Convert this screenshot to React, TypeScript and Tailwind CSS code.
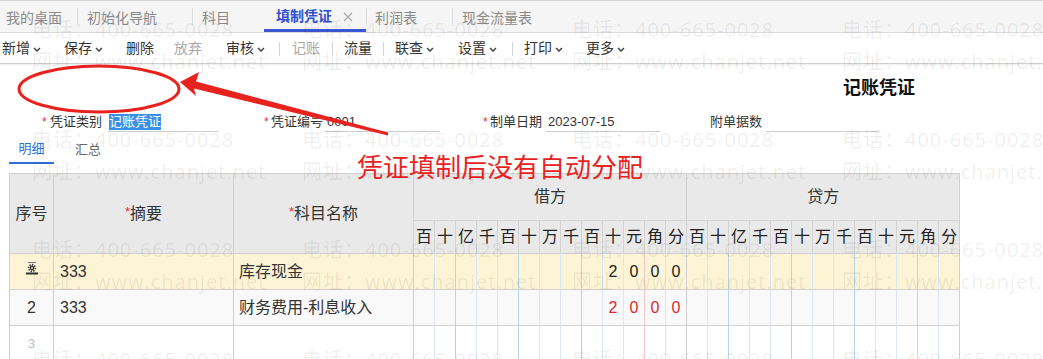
import React from "react";

const digits = ["百", "十", "亿", "千", "百", "十", "万", "千", "百", "十", "元", "角", "分"];

function Chevron() {
  return (
    <svg width="8" height="5" viewBox="0 0 8 5" className="ml-[3px] mt-[1px]">
      <path d="M1 1l3 3 3-3" fill="none" stroke="#444" strokeWidth="1.5" />
    </svg>
  );
}

function ToolItem({
  label,
  chevron,
  disabled,
  className = "",
}: {
  label: string;
  chevron?: boolean;
  disabled?: boolean;
  className?: string;
}) {
  return (
    <div className={`flex items-center ${className}`}>
      <span className={disabled ? "text-[#a8a8a8]" : "text-[#333]"}>{label}</span>
      {chevron && <Chevron />}
    </div>
  );
}

function Sep({ className = "" }: { className?: string }) {
  return <div className={`w-px h-[14px] bg-[#d4d4d4] ${className}`} />;
}

function RowIcon() {
  return (
    <svg width="12" height="13" viewBox="0 0 12 13" className="mx-auto -mt-[6px]">
      <line x1="2" y1="0.5" x2="10" y2="0.5" stroke="#777" strokeWidth="1" />
      <circle cx="6" cy="6" r="3.4" fill="none" stroke="#333" strokeWidth="1.6" strokeDasharray="1.3 1.3" />
      <circle cx="6" cy="6" r="2.4" fill="#333" />
      <circle cx="6" cy="6" r="0.9" fill="#fdf4d5" />
      <rect x="0" y="10.5" width="12" height="2" fill="#333" />
    </svg>
  );
}

function digitBorder(i: number) {
  if (i === 0) return "border-l-[#d0d0d0]";
  if (i === 11) return "border-l-[#f0c6c6]";
  if (i === 2 || i === 5 || i === 8) return "border-l-[#b9d3ea]";
  return "border-l-[#d9e8f4]";
}

function AmountCells({ values, red }: { values: string[]; red?: boolean }) {
  return (
    <>
      {digits.map((_, i) => (
        <td
          key={i}
          className={`border-l border-t border-t-[#d0d0d0] text-center ${digitBorder(i)} ${
            red ? "text-[#e02a2a]" : "text-[#222]"
          }`}
        >
          {values[i] ?? ""}
        </td>
      ))}
    </>
  );
}

function Watermark() {
  const cells = Array.from({ length: 16 });
  return (
    <div className="pointer-events-none absolute left-[32px] top-[14px] grid grid-cols-[repeat(4,270px)] auto-rows-[110px] font-['Open_Sans','Noto_Sans_CJK_SC',sans-serif] text-[20px] leading-[32px] tracking-[1px] text-black/[0.08] whitespace-nowrap">
      {cells.map((_, i) => (
        <div key={i}>
          <div>电话：400-665-0028</div>
          <div>网址：www.chanjet.net</div>
        </div>
      ))}
    </div>
  );
}

function Annotation() {
  return (
    <>
      <svg
        width="1043"
        height="359"
        viewBox="0 0 1043 359"
        className="pointer-events-none absolute left-0 top-0"
      >
        <ellipse cx="99" cy="89" rx="80" ry="23" fill="none" stroke="#e8221e" strokeWidth="3" />
        <polygon
          points="180,82 199,72 196,81.5 388,132.5 388,135.5 194,88.5 196,96"
          fill="#e8221e"
        />
      </svg>
      <div className="pointer-events-none absolute left-[357px] top-[150px] text-[26px] leading-[32px] text-[#e8231f] font-['Noto_Sans_CJK_SC',sans-serif] whitespace-nowrap">
        凭证填制后没有自动分配
      </div>
    </>
  );
}

export default function App() {
  return (
    <div className="relative w-[1043px] h-[359px] overflow-hidden bg-white font-['Liberation_Sans','Noto_Sans_CJK_SC',sans-serif]">
      {/* tabs */}
      <div className="flex h-[33px] items-stretch border-t border-b border-t-[#d6d6d6] border-b-[#dedede] bg-[#f5f5f5] text-[14px] text-[#8a8a8a]">
        <div className="flex w-[77px] items-center pl-[6px] pt-[3px]">我的桌面</div>
        <div className="my-[7px] w-px bg-[#dcdcdc]" />
        <div className="flex w-[114px] items-center pl-[9px] pt-[3px]">初始化导航</div>
        <div className="my-[7px] w-px bg-[#dcdcdc]" />
        <div className="flex w-[71px] items-center pl-[9px] pt-[3px]">科目</div>
        <div className="flex w-[102px] items-center border-b-[3px] border-[#3a57d6] pl-[12px] pt-[3px]">
          <span className="font-bold text-[#2f4fd0]">填制凭证</span>
          <svg width="10" height="10" viewBox="0 0 10 10" className="ml-[11px]">
            <path d="M1 1l8 8M9 1l-8 8" stroke="#aaa" strokeWidth="1.2" />
          </svg>
        </div>
        <div className="my-[7px] w-px bg-[#dcdcdc]" />
        <div className="flex w-[85px] items-center pl-[8px] pt-[3px]">利润表</div>
        <div className="my-[7px] w-px bg-[#dcdcdc]" />
        <div className="flex items-center pl-[9px] pt-[3px]">现金流量表</div>
      </div>

      {/* toolbar */}
      <div className="flex h-[31px] items-center border-b border-[#cfcfcf] pl-[2px] pt-[1px] text-[14px] shadow-[0_1px_2px_rgba(0,0,0,0.08)]">
        <ToolItem label="新增" chevron />
        <ToolItem label="保存" chevron className="ml-[23px]" />
        <ToolItem label="删除" className="ml-[23px]" />
        <ToolItem label="放弃" disabled className="ml-[20px]" />
        <ToolItem label="审核" chevron className="ml-[24px]" />
        <Sep className="ml-[14px]" />
        <ToolItem label="记账" disabled className="ml-[12px]" />
        <Sep className="ml-[12px]" />
        <ToolItem label="流量" className="ml-[11px]" />
        <Sep className="ml-[11px]" />
        <ToolItem label="联查" chevron className="ml-[11px]" />
        <ToolItem label="设置" chevron className="ml-[24px]" />
        <Sep className="ml-[15px]" />
        <ToolItem label="打印" chevron className="ml-[11px]" />
        <ToolItem label="更多" chevron className="ml-[23px]" />
      </div>

      {/* title */}
      <div className="flex h-[48px] items-center justify-end pr-[128px]">
        <span className="text-[18px] font-bold text-[#111]">记账凭证</span>
      </div>

      {/* header fields */}
      <div className="flex h-[20px] items-center text-[13px] text-[#333]">
        <span className="ml-[42px] w-[8px] text-[12px] text-[#e03030]">*</span>
        <span>凭证类别</span>
        <div className="ml-[6px] flex h-[20px] w-[110px] items-center border-b border-[#cccccc] pl-[1px]">
          <span className="bg-[#3b8fe8] leading-[16px] text-white">记账凭证</span>
        </div>
        <span className="ml-[46px] w-[7px] text-[12px] text-[#e03030]">*</span>
        <span>凭证编号</span>
        <div className="ml-[2px] flex h-[20px] w-[115px] items-center border-b border-[#cccccc] pl-[2px]">
          0001
        </div>
        <span className="ml-[43px] w-[7px] text-[12px] text-[#e03030]">*</span>
        <span>制单日期</span>
        <div className="ml-[4px] flex h-[20px] w-[114px] items-center border-b border-[#cccccc] pl-[2px]">
          2023-07-15
        </div>
        <span className="ml-[50px]">附单据数</span>
        <div className="ml-[4px] h-[20px] w-[113px] border-b border-[#cccccc]" />
      </div>

      {/* detail / summary tabs */}
      <div className="flex h-[32px] items-stretch text-[13px]">
        <div className="ml-[9px] flex w-[45px] items-center justify-center border-b-[2px] border-[#2f6fd6] pt-[4px] text-[#2f6fd6]">
          明细
        </div>
        <div className="ml-[21px] flex items-center pt-[4px] text-[#666]">汇总</div>
      </div>

      {/* voucher table */}
      <div className="mt-[9px] pl-[9px]">
        <table className="w-[950px] table-fixed border-separate border-spacing-0 border-r border-[#d0d0d0] text-[16px] text-[#333]">
          <colgroup>
            <col className="w-[44px]" />
            <col className="w-[180px]" />
            <col className="w-[180px]" />
            {Array.from({ length: 26 }).map((_, i) => (
              <col key={i} className="w-[21px]" />
            ))}
          </colgroup>
          <thead>
            <tr className="h-[47px] bg-[#e9e9e9]">
              <th rowSpan={2} className="border-l border-t border-[#d0d0d0] font-normal">
                序号
              </th>
              <th rowSpan={2} className="border-l border-t border-[#d0d0d0] font-normal">
                <span className="relative -top-[3px] text-[13px] text-[#e03030]">*</span>摘要
              </th>
              <th rowSpan={2} className="border-l border-t border-[#d0d0d0] font-normal">
                <span className="relative -top-[3px] text-[13px] text-[#e03030]">*</span>科目名称
              </th>
              <th colSpan={13} className="border-l border-t border-[#d0d0d0] font-normal">
                借方
              </th>
              <th colSpan={13} className="border-l border-t border-[#d0d0d0] font-normal">
                贷方
              </th>
            </tr>
            <tr className="h-[33px] bg-[#e9e9e9]">
              {[...digits, ...digits].map((d, i) => (
                <th key={i} className="border-l border-t border-[#d3d3d3] p-0 font-normal text-[#222]">
                  {d}
                </th>
              ))}
            </tr>
          </thead>
          <tbody>
            <tr className="h-[36px] bg-[#fdf4d5]">
              <td className="border-l border-t border-[#d0d0d0] text-center">
                <RowIcon />
              </td>
              <td className="border-l border-t border-[#d0d0d0] pl-[6px]">333</td>
              <td className="border-l border-t border-[#d0d0d0] pl-[5px]">库存现金</td>
              <AmountCells values={["", "", "", "", "", "", "", "", "", "2", "0", "0", "0"]} />
              <AmountCells values={[]} />
            </tr>
            <tr className="h-[36px] bg-[#f9f9f9]">
              <td className="border-l border-t border-[#d0d0d0] text-center">2</td>
              <td className="border-l border-t border-[#d0d0d0] pl-[6px]">333</td>
              <td className="border-l border-t border-[#d0d0d0] pl-[5px]">财务费用-利息收入</td>
              <AmountCells red values={["", "", "", "", "", "", "", "", "", "2", "0", "0", "0"]} />
              <AmountCells values={[]} />
            </tr>
            <tr className="h-[36px] bg-white">
              <td className="border-l border-t border-[#d0d0d0] text-center text-[12px] text-[#bbb]">3</td>
              <td className="border-l border-t border-[#d0d0d0]" />
              <td className="border-l border-t border-[#d0d0d0]" />
              <AmountCells values={[]} />
              <AmountCells values={[]} />
            </tr>
          </tbody>
        </table>
      </div>

      <Watermark />
      <Annotation />
    </div>
  );
}
